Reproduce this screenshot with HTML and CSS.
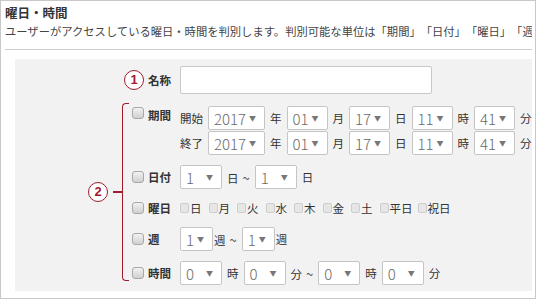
FILE: index.html
```html
<!DOCTYPE html>
<html lang="ja">

<head>
    <meta charset="UTF-8">
    <meta name="viewport" content="width=device-width, initial-scale=1.0">
    <title>曜日・時間</title>
    <link rel="stylesheet" href="styles.css">
</head>

<body>
    <div class="frame">
        <div class="title">曜日・時間</div>
        <div class="desc">ユーザーがアクセスしている曜日・時間を判別します。判別可能な単位は「期間」「日付」「曜日」「週」「時間」です。</div>
        <hr class="rule">

        <div class="panel">
            <div class="name-row">
                <span class="num">1</span>
                <span class="label">名称</span>
                <input type="text" class="text">
            </div>

            <div class="group">
                <div class="marker">
                    <span class="num">2</span>
                    <span class="tick"></span>
                    <span class="brace"></span>
                </div>

                <div class="opts">
                    <!-- 期間 -->
                    <div class="opt top">
                        <input type="checkbox" class="chk">
                        <span class="label">期間</span>
                        <div class="lines">
                            <div class="ctrl">
                                <span class="txt">開始</span>
                                <span class="sel sel-year">2017</span>
                                <span class="txt">年</span>
                                <span class="sel sel-2">01</span>
                                <span class="txt">月</span>
                                <span class="sel sel-2">17</span>
                                <span class="txt">日</span>
                                <span class="sel sel-2">11</span>
                                <span class="txt">時</span>
                                <span class="sel sel-2">41</span>
                                <span class="txt">分</span>
                            </div>
                            <div class="ctrl">
                                <span class="txt">終了</span>
                                <span class="sel sel-year">2017</span>
                                <span class="txt">年</span>
                                <span class="sel sel-2">01</span>
                                <span class="txt">月</span>
                                <span class="sel sel-2">17</span>
                                <span class="txt">日</span>
                                <span class="sel sel-2">11</span>
                                <span class="txt">時</span>
                                <span class="sel sel-2">41</span>
                                <span class="txt">分</span>
                            </div>
                        </div>
                    </div>

                    <!-- 日付 -->
                    <div class="opt">
                        <input type="checkbox" class="chk">
                        <span class="label">日付</span>
                        <div class="ctrl">
                            <span class="sel sel-wide">1</span>
                            <span class="txt">日<span class="tilde">~</span></span>
                            <span class="sel sel-wide">1</span>
                            <span class="txt">日</span>
                        </div>
                    </div>

                    <!-- 曜日 -->
                    <div class="opt week-days">
                        <input type="checkbox" class="chk">
                        <span class="label">曜日</span>
                        <div class="days">
                            <label class="day"><input type="checkbox" class="chk-sm">日</label>
                            <label class="day"><input type="checkbox" class="chk-sm">月</label>
                            <label class="day"><input type="checkbox" class="chk-sm">火</label>
                            <label class="day"><input type="checkbox" class="chk-sm">水</label>
                            <label class="day"><input type="checkbox" class="chk-sm">木</label>
                            <label class="day"><input type="checkbox" class="chk-sm">金</label>
                            <label class="day"><input type="checkbox" class="chk-sm">土</label>
                            <label class="day"><input type="checkbox" class="chk-sm">平日</label>
                            <label class="day"><input type="checkbox" class="chk-sm">祝日</label>
                        </div>
                    </div>

                    <!-- 週 -->
                    <div class="opt">
                        <input type="checkbox" class="chk">
                        <span class="label">週</span>
                        <div class="ctrl tight">
                            <span class="sel sel-narrow">1</span>
                            <span class="txt">週<span class="tilde">~</span></span>
                            <span class="sel sel-narrow">1</span>
                            <span class="txt">週</span>
                        </div>
                    </div>

                    <!-- 時間 -->
                    <div class="opt">
                        <input type="checkbox" class="chk">
                        <span class="label">時間</span>
                        <div class="ctrl">
                            <span class="sel sel-wide">0</span>
                            <span class="txt">時</span>
                            <span class="sel sel-wide">0</span>
                            <span class="txt">分<span class="tilde">~</span></span>
                            <span class="sel sel-wide">0</span>
                            <span class="txt">時</span>
                            <span class="sel sel-wide">0</span>
                            <span class="txt">分</span>
                        </div>
                    </div>
                </div>
            </div>
        </div>
    </div>
</body>

</html>
```

FILE: styles.css
```css
html,
body {
    margin: 0;
    height: 100%;
}

body {
    font-family: "Noto Sans CJK JP", "Noto Sans", sans-serif;
    color: #333;
    background: #fff;
    text-spacing-trim: space-all;
}

.frame {
    box-sizing: border-box;
    height: 299px;
    border: 1px solid #c8c8c8;
    padding: 4px 3px 0 4px;
    overflow: hidden;
    white-space: nowrap;
}

.title {
    font-size: 12.5px;
    font-weight: bold;
    line-height: 16px;
    color: #333;
}

.desc {
    margin-top: 2px;
    font-size: 11.3px;
    line-height: 16px;
    color: #444;
    overflow: hidden;
}

.rule {
    margin: 10px 0 9px 0;
    border: 0;
    border-top: 1px solid #cfcfcf;
}

.panel {
    margin-left: 10px;
    background: #f2f2f2;
    padding: 7px 0 6px 0;
}

/* 丸数字 */
.num {
    box-sizing: border-box;
    flex: none;
    width: 20px;
    height: 20px;
    border: 1.5px solid #9e1c2b;
    border-radius: 50%;
    color: #9e1c2b;
    font-family: "Liberation Sans", sans-serif;
    font-weight: bold;
    font-size: 13px;
    line-height: 17px;
    text-align: center;
    background: #fff;
}

.label {
    flex: none;
    width: 32px;
    font-size: 11.5px;
    font-weight: bold;
    color: #333;
}

.name-row {
    display: flex;
    align-items: center;
    padding-left: 109px;
}

.name-row .num {
    margin-right: 4px;
}

.text {
    box-sizing: border-box;
    width: 252px;
    height: 28px;
    margin: 0;
    border: 1px solid #c8c8c8;
    border-radius: 2px;
    background: #fff;
}

.group {
    display: flex;
    margin: 12px 0 0 73px;
}

.marker {
    display: flex;
    align-items: center;
    margin: -3px 3px 4px 0;
}

.tick {
    width: 9px;
    height: 1.5px;
    margin-left: 5px;
    background: #9e1c2b;
}

.brace {
    box-sizing: border-box;
    align-self: stretch;
    width: 7px;
    border: 1.5px solid #9e1c2b;
    border-right: 0;
    border-radius: 4px 0 0 4px;
}

.opts {
    display: flex;
    flex-direction: column;
    gap: 10px;
}

.opt {
    display: flex;
    align-items: center;
}

.opt.top {
    align-items: flex-start;
}

.opt.top .label {
    line-height: 18px;
}

.opt.week-days {
    height: 18px;
}

/* チェックボックス */
.chk {
    appearance: none;
    box-sizing: border-box;
    flex: none;
    width: 12px;
    height: 12px;
    margin: 0 4px 0 0;
    border: 1px solid #a9a9a9;
    border-radius: 3px;
    background: linear-gradient(#f2f2f2, #d0d0d0);
}

.opt.top .chk {
    margin-top: 1px;
}

.lines {
    display: flex;
    flex-direction: column;
    gap: 1px;
}

.ctrl {
    display: flex;
    align-items: center;
    gap: 5px;
}

.ctrl.tight {
    gap: 0;
}

.ctrl.tight .txt {
    margin: 0 5px 0 1px;
}

.txt {
    font-size: 11.5px;
    color: #333;
}

.tilde {
    margin-left: 4px;
    font-size: 13px;
    color: #555;
}

/* セレクト */
.sel {
    box-sizing: border-box;
    display: inline-flex;
    align-items: center;
    justify-content: space-between;
    height: 24px;
    padding: 0 8px 0 5px;
    border: 1px solid #c5c5c5;
    border-radius: 2px;
    background: #fff;
    font-size: 15px;
    font-weight: 300;
    color: #6a6a6a;
}

.sel::after {
    content: "▼";
    font-size: 7px;
    color: #777;
}

.sel-year {
    width: 57px;
}

.sel-2 {
    width: 41px;
}

.sel-wide {
    width: 42px;
}

.sel-narrow {
    width: 33px;
}

.days {
    display: flex;
    align-items: center;
}

.day {
    display: flex;
    align-items: center;
    margin-right: 7px;
    font-size: 11.5px;
    color: #333;
}

.day:nth-child(n+8) {
    margin-right: 5px;
}

.chk-sm {
    appearance: none;
    box-sizing: border-box;
    width: 9px;
    height: 10px;
    margin: 0 1px 0 0;
    border: 1px solid #cdcdcd;
    border-radius: 2px;
    background: #e6e6e6;
}
```
